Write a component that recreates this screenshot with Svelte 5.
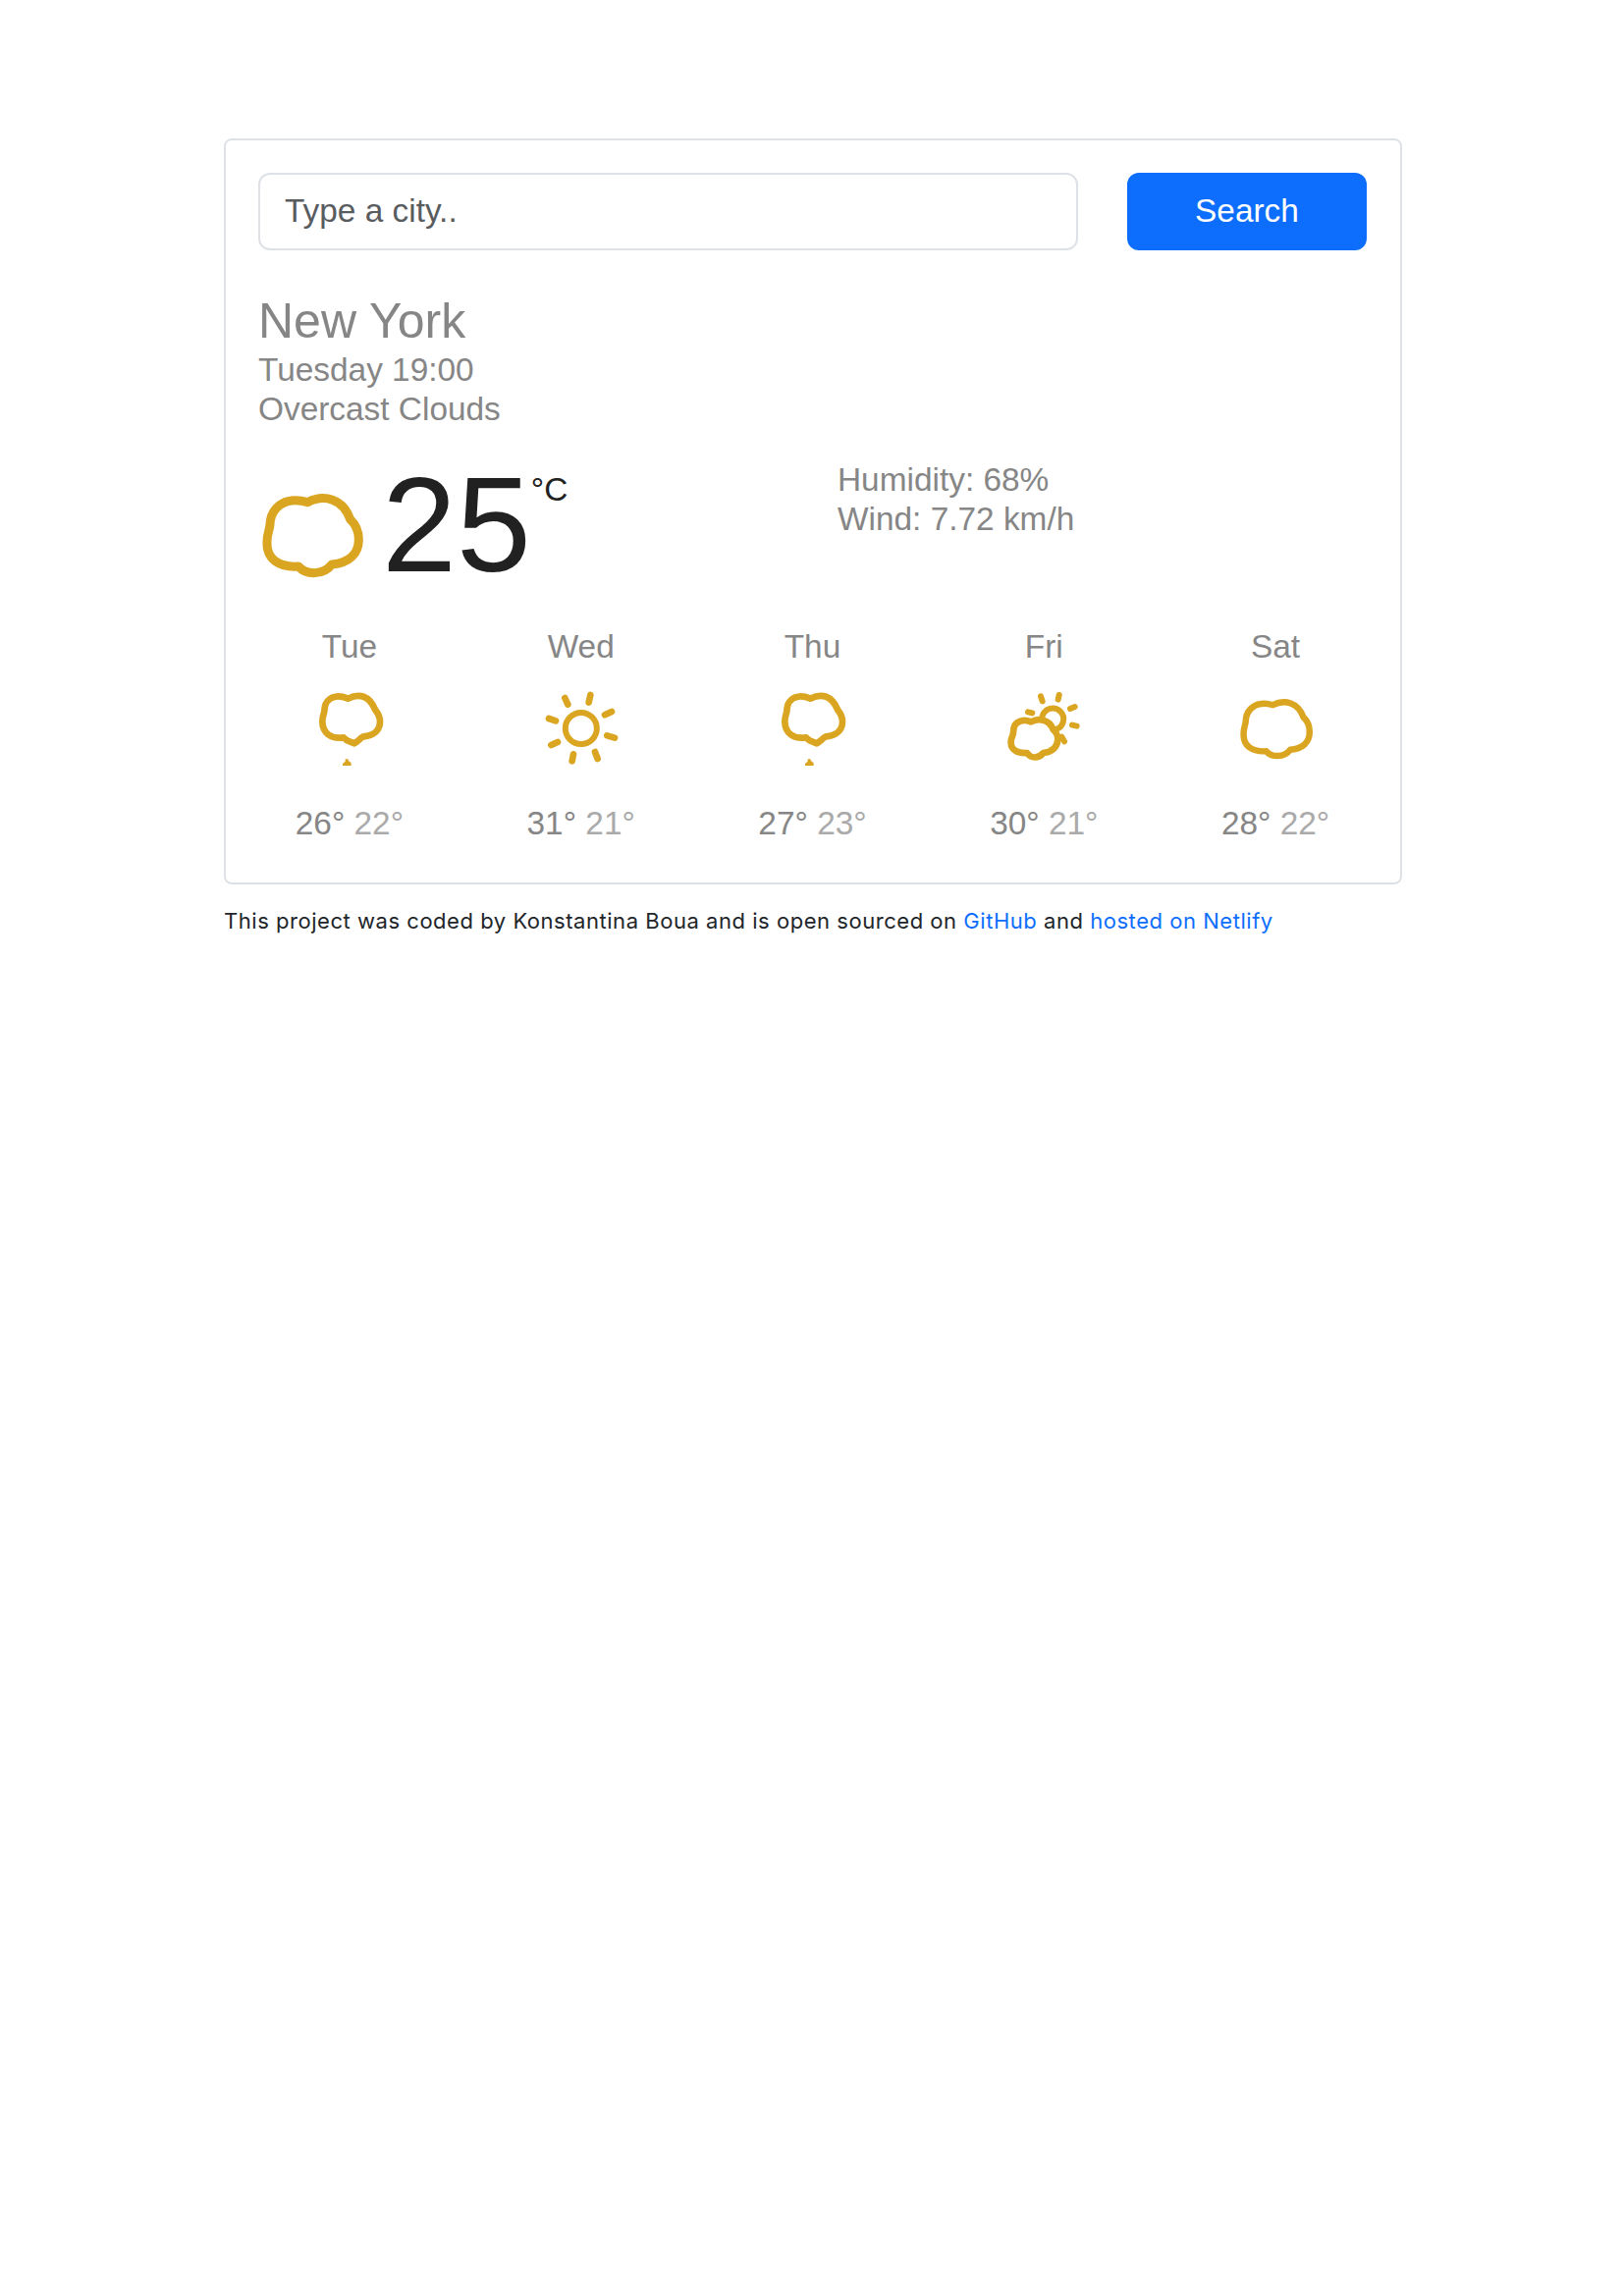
<script>
  const forecast = [
    { day: 'Tue', icon: 'rain', max: 26, min: 22 },
    { day: 'Wed', icon: 'sun', max: 31, min: 21 },
    { day: 'Thu', icon: 'rain', max: 27, min: 23 },
    { day: 'Fri', icon: 'partly', max: 30, min: 21 },
    { day: 'Sat', icon: 'cloud', max: 28, min: 22 },
  ];
</script>

{#snippet cloud()}
  <path
    stroke-width="27"
    d="M190 154C170 148 152 147 140 149C102 154 76 183 75 222C74 240 65 250 66 278C64 325 100 354 162 350C185 377 238 378 264 344C318 340 346 310 346 268C346 240 335 220 320 206C298 143 240 128 190 154Z"
  />
{/snippet}

<main>
  <section class="card">
    <form class="search" onsubmit={(e) => e.preventDefault()}>
      <input type="text" placeholder="Type a city.." aria-label="City" />
      <button type="submit">Search</button>
    </form>

    <div class="overview">
      <h1>New York</h1>
      <p>Tuesday 19:00</p>
      <p>Overcast Clouds</p>
    </div>

    <div class="current">
      <div class="temperature">
        <svg class="icon-main" viewBox="42 95 324 324">{@render cloud()}</svg>
        <span class="degrees">25</span>
        <span class="unit">°C</span>
      </div>
      <div class="details">
        <p>Humidity: 68%</p>
        <p>Wind: 7.72 km/h</p>
      </div>
    </div>

    <div class="forecast">
      {#each forecast as item}
        <div class="day">
          <div>{item.day}</div>
          {#if item.icon === 'rain'}
            <svg viewBox="72 210 252 252">
              <path stroke-width="20" d="M193 245C178 239 165 237 155 239C132 243 121 262 121 284C119 295 115 300 115 315C115 350 142 370 180 364C190 376 200 376 212 382C222 378 230 366 241 361C275 358 291 340 291 315C291 300 285 290 277 280C258 235 228 228 193 245Z" />
              <path class="drop" d="M185 430H194V434L203 442V450H177V444L185 437Z" />
            </svg>
          {:else if item.icon === 'sun'}
            <svg viewBox="60 210 252 252">
              <circle cx="185.500" cy="336" r="48" />
              <path stroke-width="20" d="M136 243L145 263M214 234L209 257M258 295L279 285M265 358L288 365M228 408L236 429M162 415L158 436M94 387L114 378M87 306L108 313" />
            </svg>
          {:else if item.icon === 'partly'}
            <svg viewBox="65 210 252 252">
              <path d="M187 298A33 33 0 1 1 229 339" />
              <path d="M182 238L187 253M238 234L235 248M272 276L286 270M278 326L292 329M246 362L254 376M143 286L156 289" />
              <path stroke-width="20" d="M152 316C140 311 125 311 117 315C98 321 98 343 98 350C97 362 90 365 91 380C91 402 112 413 140 411C152 429 175 429 190 411C215 408 233 395 234 370C234 356 228 346 220 340C208 308 175 304 152 316Z" />
            </svg>
          {:else}
            <svg viewBox="26 78 350 350">{@render cloud()}</svg>
          {/if}
          <div>{item.max}° <span class="min">{item.min}°</span></div>
        </div>
      {/each}
    </div>
  </section>

  <footer>
    This project was coded by Konstantina Boua and is open sourced on
    <a href="#github">GitHub</a> and <a href="#netlify">hosted on Netlify</a>
  </footer>
</main>

<style>
  :global(body) {
    margin: 0;
    background: #fff;
  }
  main {
    box-sizing: border-box;
    width: 1200px;
    margin-left: 228px;
    padding-top: 140.500px;
  }
  .card {
    box-sizing: border-box;
    height: 760px;
    padding: 33.500px 34px 0 33px;
    border: 2px solid #dee2e6;
    border-radius: 8px;
    color: #868686;
    font: 33.4px/40px 'Liberation Sans', Arial, sans-serif;
  }
  p,
  h1 {
    margin: 0;
    font-weight: 400;
  }
  .search {
    display: flex;
    gap: 50px;
    height: 79px;
  }
  input {
    box-sizing: border-box;
    flex: 1;
    min-width: 0;
    padding: 0 25px 2px;
    border: 2px solid #dee2e6;
    border-radius: 12px;
    background: #fff;
    font: inherit;
    outline: 0;
  }
  input::placeholder {
    color: #595c5f;
    opacity: 1;
  }
  button {
    width: 244px;
    padding: 0 0 2px;
    border: 0;
    border-radius: 12px;
    background: #0d6efd;
    color: #fff;
    font: inherit;
  }
  .overview {
    margin-top: 41.500px;
  }
  h1 {
    font-size: 50px;
    line-height: 60px;
  }
  .current {
    display: grid;
    grid-template-columns: 590px 1fr;
    height: 169.500px;
    margin-top: 32.500px;
  }
  .temperature {
    display: flex;
    align-items: flex-start;
  }
  svg {
    fill: none;
    stroke: #daa520;
    stroke-width: 18;
    stroke-linecap: round;
    stroke-linejoin: round;
  }
  .icon-main {
    width: 108px;
    height: 108px;
    margin: 22.500px 17px 0 1px;
  }
  .degrees {
    margin-top: -2px;
    color: #212121;
    font-size: 136.500px;
    line-height: 136px;
  }
  .unit {
    margin-top: 10px;
    color: #212121;
  }
  .forecast {
    display: grid;
    grid-template-columns: repeat(5, 235.800px);
    margin-left: -25px;
    text-align: center;
  }
  .day svg {
    display: block;
    width: 84px;
    height: 84px;
    margin: 21.500px auto 35px;
  }
  .drop {
    fill: #daa520;
    stroke: none;
  }
  .min {
    color: #aaa;
  }
  footer {
    margin-top: 19.500px;
    color: #212529;
    font: 22px/36px Inter, sans-serif;
    letter-spacing: 0.535px;
    white-space: nowrap;
  }
  a {
    color: #0d6efd;
    text-decoration: none;
  }
</style>
